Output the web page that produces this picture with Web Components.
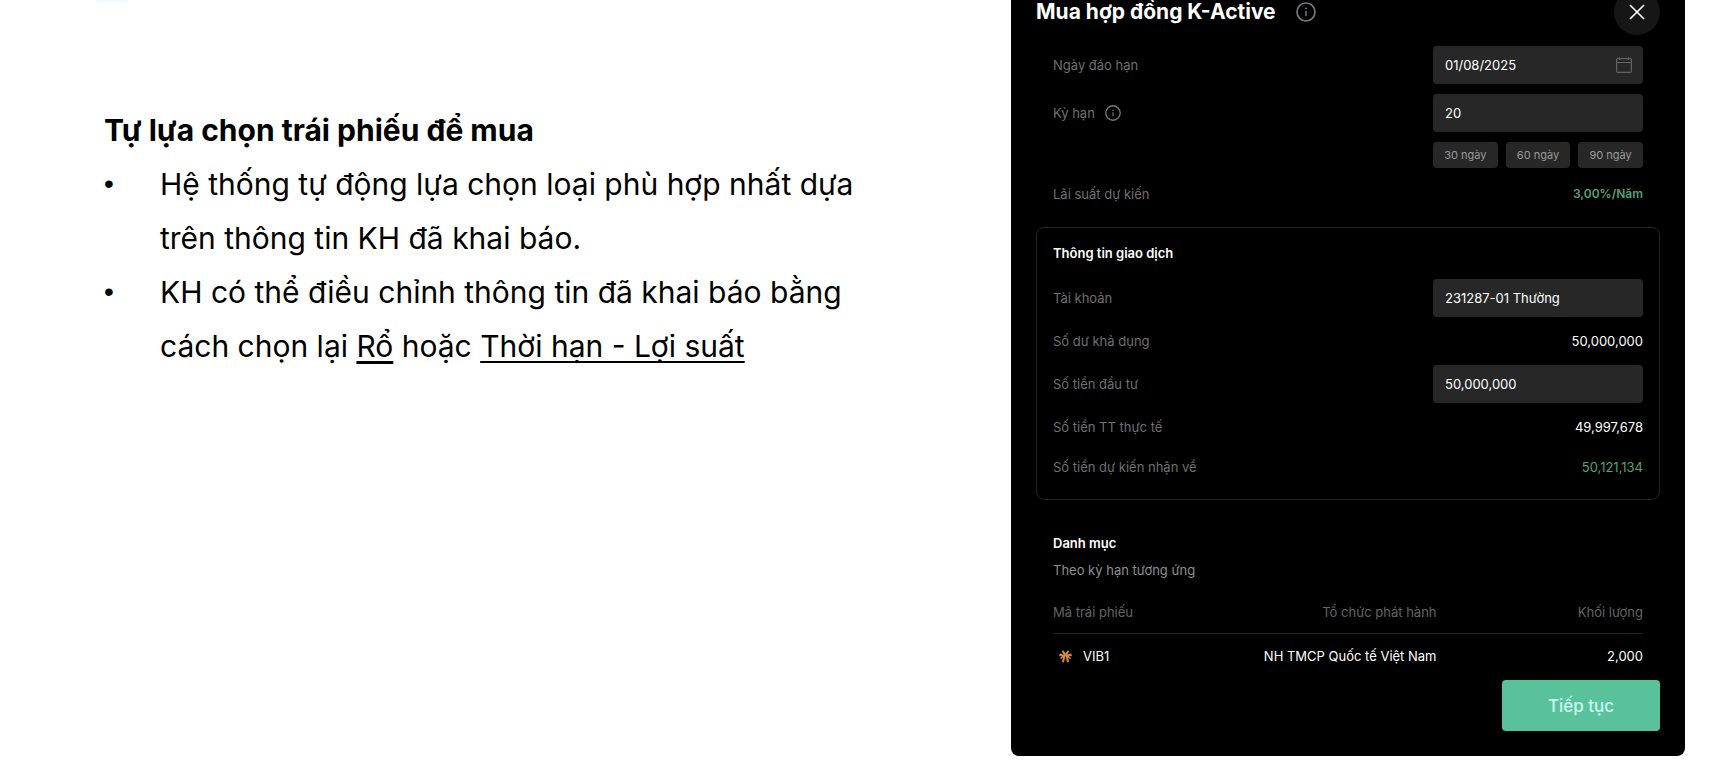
<!DOCTYPE html>
<html lang="vi">
<head>
<meta charset="utf-8">
<meta name="viewport" content="width=device-width, initial-scale=1">
<title>Mua hợp đồng K-Active</title>
<style>
  html { background: #fff; }
  body { margin: 0; font-family: Inter, "Noto Sans", sans-serif; color: #000; overflow: hidden; }
</style>
</head>
<body>
<guide-page>
  <guide-notes slot="notes">
    <span slot="title">Tự lựa chọn trái phiếu để mua</span>
    <guide-point>Hệ thống tự động lựa chọn loại phù hợp nhất dựa trên thông tin KH đã khai báo.</guide-point>
    <guide-point>KH có thể điều chỉnh thông tin đã khai báo bằng cách chọn lại <text-link class="strong">Rổ</text-link> hoặc <text-link>Thời hạn - Lợi suất</text-link></guide-point>
  </guide-notes>
  <order-panel slot="panel" heading="Mua hợp đồng K-Active">
    <form-row label="Ngày đáo hạn" value="01/08/2025" icon="calendar" slot="terms"></form-row>
    <form-row label="Kỳ hạn" value="20" info slot="terms"></form-row>
    <day-chips slot="terms"></day-chips>
    <value-row tone="green" strong slot="terms"><span slot="label">Lãi suất dự kiến</span>3,00%/Năm</value-row>
    <info-card heading="Thông tin giao dịch" slot="card">
      <form-row label="Tài khoản" value="231287-01 Thường"></form-row>
      <value-row><span slot="label">Số dư khả dụng</span>50,000,000</value-row>
      <form-row label="Số tiền đầu tư" value="50,000,000"></form-row>
      <value-row><span slot="label">Số tiền TT thực tế</span>49,997,678</value-row>
      <value-row tone="green" last><span slot="label">Số tiền dự kiến nhận về</span>50,121,134</value-row>
    </info-card>
    <bond-list slot="list"></bond-list>
    <action-button slot="action">Tiếp tục</action-button>
  </order-panel>
</guide-page>

<script>
const define = (name, html, setup) => {
  const template = document.createElement('template');
  template.innerHTML = html;
  customElements.define(name, class extends HTMLElement {
    constructor() {
      super();
      this.attachShadow({ mode: 'open' }).append(template.content.cloneNode(true));
    }
    connectedCallback() { if (setup) setup(this, this.shadowRoot); }
  });
};

define('guide-page', `
<style>
  :host { display: grid; grid-template-columns: minmax(0, 1fr) 40%; padding-right: 33px; align-items: start; }
</style>
<slot name="notes"></slot>
<slot name="panel"></slot>`);

define('guide-notes', `
<style>
  :host { display: block; position: relative; padding: 103px 48px 0 104px; max-width: 776px; }
  .glow { position: absolute; top: 0; left: 96px; width: 32px; height: 4px; background: linear-gradient(#ecfafa, #fff); }
  h1 { margin: 0; font-size: 30px; line-height: 54px; font-weight: 700; }
  ul { margin: 0; padding: 0; list-style: none; }
</style>
<div class="glow"></div>
<h1><slot name="title"></slot></h1>
<ul><slot></slot></ul>`, host => {
  host.querySelectorAll('guide-point').forEach(p => p.setAttribute('role', 'listitem'));
});

define('guide-point', `
<style>
  :host { display: grid; grid-template-columns: 56px minmax(0, 1fr); font-size: 30px; line-height: 54px; }
  .dot { font-family: "Liberation Sans", sans-serif; font-size: 28px; }
</style>
<span class="dot">•</span>
<div><slot></slot></div>`);

define('text-link', `
<style>
  :host { display: inline; --line: 2px; }
  :host(.strong) { --line: 3px; }
  a { color: inherit; text-decoration: underline; text-decoration-thickness: var(--line); text-underline-offset: 4px; text-decoration-skip-ink: none; }
</style><a href="#"><slot></slot></a>`);

define('info-icon', `
<style>
  :host { display: block; width: 20px; height: 20px; color: #77777d; }
  svg { display: block; width: 100%; height: 100%; }
</style>
<svg viewBox="0 0 20 20" fill="none" stroke="currentColor" stroke-width="1.7" aria-hidden="true">
  <circle cx="10" cy="10" r="9"/>
  <path d="M10 9v5" stroke-width="1.500"/>
  <circle cx="10" cy="6.500" r="1" fill="currentColor" stroke="none"/>
</svg>`);

define('order-panel', `
<style>
  :host { display: block; margin-top: -35px; padding: 24px 25px 25px; background: #000; color: #fff; border-radius: 8px; font-size: 13px; line-height: 20px; }
  header { display: flex; align-items: center; gap: 20px; margin-bottom: 11px; }
  h2 { margin: 0; font-size: 21px; line-height: 28px; font-weight: 700; }
  button { margin: 0 0 0 auto; width: 46px; height: 46px; padding: 0; border: 0; border-radius: 50%; background: #161616; display: grid; place-items: center; }
  .terms { display: grid; row-gap: 10px; padding: 0 17px; margin-bottom: 23px; }
  .list { padding: 0 17px; margin: 33px 0 14px; }
  footer { display: flex; justify-content: flex-end; }
</style>
<header>
  <h2></h2>
  <info-icon></info-icon>
  <button type="button" aria-label="Đóng">
    <svg width="16" height="16" viewBox="0 0 16 16" fill="none" stroke="#fff" stroke-width="1.6"><path d="M1 1l14 14M15 1L1 15"/></svg>
  </button>
</header>
<div class="terms"><slot name="terms"></slot></div>
<slot name="card"></slot>
<div class="list"><slot name="list"></slot></div>
<footer><slot name="action"></slot></footer>`, (host, root) => {
  root.querySelector('h2').textContent = host.getAttribute('heading');
});

define('form-row', `
<style>
  :host { display: flex; justify-content: space-between; align-items: center; }
  .name { display: flex; align-items: center; gap: 10px; }
  label { color: #6f6f6f; }
  info-icon { width: 16px; height: 16px; }
  .box { display: flex; align-items: center; box-sizing: border-box; width: 210px; height: 38px; padding: 0 11px 0 12px; border-radius: 4px; background: #272727; }
  input { flex: 1; min-width: 0; padding: 0; border: 0; outline: 0; background: none; color: #fff; font: inherit; line-height: 20px; height: 20px; }
  svg, info-icon { display: none; }
  :host([icon]) svg, :host([info]) info-icon { display: block; }
</style>
<div class="name"><label for="field"></label><info-icon></info-icon></div>
<div class="box">
  <input id="field" type="text">
  <svg width="16" height="16" viewBox="0 0 16 16" fill="none" stroke="#606060" stroke-width="1.2" aria-hidden="true"><rect x=".6" y="1.600" width="14.800" height="13.800" rx="1"/><path d="M.5 5.500h15M3.500 0v3M12.500 0v3"/></svg>
</div>`, (host, root) => {
  root.querySelector('label').textContent = host.getAttribute('label');
  root.querySelector('input').value = host.getAttribute('value');
});

define('day-chips', `
<style>
  :host { display: grid; grid-template-columns: repeat(3, 1fr); gap: 8px; width: 210px; margin-left: auto; }
  button { height: 26px; padding: 0; border: 0; border-radius: 4px; background: #272727; color: #999; font: inherit; font-size: 11px; line-height: 16px; }
</style>
<button type="button">30 ngày</button>
<button type="button">60 ngày</button>
<button type="button">90 ngày</button>`);

define('value-row', `
<style>
  :host { display: flex; justify-content: space-between; }
  .label { color: #6f6f6f; }
  :host([tone="green"]) .value { color: #55a075; }
  :host([strong]) { margin-top: 6px; }
  :host([strong]) .value { font-size: 12px; font-weight: 600; }
  :host([last]) { margin-top: 6px; }
</style>
<span class="label"><slot name="label"></slot></span>
<span class="value"><slot></slot></span>`);

define('info-card', `
<style>
  :host { display: grid; row-gap: 14px; padding: 15px 16px 22px; border: 1px solid #222; border-radius: 8px; }
  h3 { margin: 0 0 2px; font-size: 13px; line-height: 20px; font-weight: 600; }
</style>
<h3></h3>
<slot></slot>`, (host, root) => {
  root.querySelector('h3').textContent = host.getAttribute('heading');
});

define('bond-list', `
<style>
  :host { display: block; }
  h3 { margin: 0; font-size: 13px; line-height: 20px; font-weight: 600; }
  p { margin: 7px 0 22px; color: #8f8f8f; }
  table { width: 100%; border-collapse: collapse; table-layout: fixed; }
  th { height: 20px; padding: 0 0 11px; font-weight: 400; color: #646464; text-align: right; border-bottom: 1px solid #222; }
  td { padding: 12px 0 0; text-align: right; }
  th:nth-child(1), td:nth-child(1) { width: 30%; text-align: left; }
  th:nth-child(2) { width: 35%; }
  .code { display: flex; align-items: center; gap: 11px; padding-left: 6px; }
</style>
<h3>Danh mục</h3>
<p>Theo kỳ hạn tương ứng</p>
<table>
  <thead><tr><th scope="col">Mã trái phiếu</th><th scope="col">Tổ chức phát hành</th><th scope="col">Khối lượng</th></tr></thead>
  <tbody><tr>
    <td><span class="code">
      <svg width="13" height="13" viewBox="0 0 13 13" fill="none" stroke="#d98a42" stroke-width="2" aria-hidden="true"><path d="M3.500 .7l2.500 3.800M9.500 .7L7 4.500M.4 4.500q3 1.500 6 .5q3.200 1 6.200-.5M5.500 5L4 12.300M7.500 5L9 12.300"/><path d="M4.500 6L1.500 8.500M8.500 6l3 2.500" stroke-width="1.600"/></svg>
      VIB1</span></td>
    <td>NH TMCP Quốc tế Việt Nam</td>
    <td>2,000</td>
  </tr></tbody>
</table>`);

define('action-button', `
<style>
  :host { display: block; }
  button { width: 158px; height: 51px; padding: 0; border: 0; border-radius: 4px; background: #59c29a; color: #c9fbf3; font: inherit; font-size: 17px; line-height: 24px; font-weight: 500; }
</style>
<button type="button"><slot></slot></button>`);
</script>
</body>
</html>
